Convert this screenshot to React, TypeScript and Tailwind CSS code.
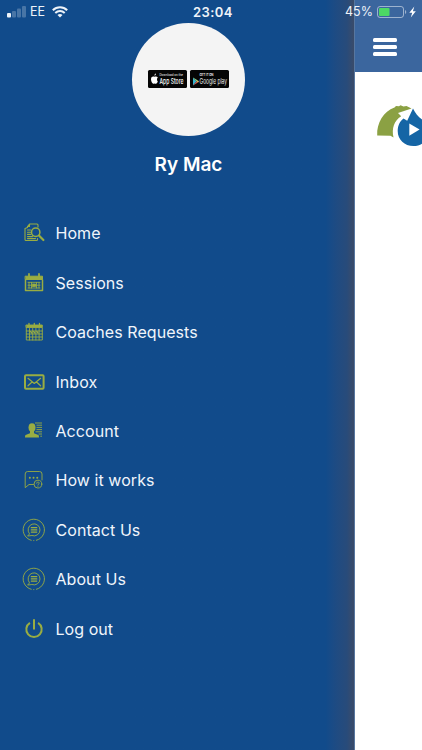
import clsx from 'clsx'

type IconProps = React.ComponentPropsWithoutRef<'svg'>

function SvgIcon({ children, className, ...props }: IconProps) {
  return (
    <svg
      viewBox="0 0 22 22"
      fill="none"
      stroke="currentColor"
      strokeLinecap="round"
      strokeLinejoin="round"
      aria-hidden="true"
      className={clsx('h-[22px] w-[22px] shrink-0', className)}
      {...props}
    >
      {children}
    </svg>
  )
}

function SearchDocumentIcon() {
  return (
    <SvgIcon strokeWidth="1.1">
      <path d="M4.5 5.500V4.500L6.500 2H14a1 1 0 0 1 1 1v2M6.500 2v2.500h-2M2 6.500v11a1 1 0 0 0 1 1h10.500a1 1 0 0 0 1-1v-1M2 6.500l2.500-1" />
      <path d="M4.500 8h3M4.500 10.200h3M4.500 12.400h3M4.500 14.600h5M4.500 16.600h8" />
      <circle cx="12.700" cy="10.300" r="4.200" strokeWidth="1.500" />
      <path d="m16.200 13.700 4.200 4.300" strokeWidth="2.200" />
    </SvgIcon>
  )
}

function CalendarIcon() {
  return (
    <SvgIcon strokeWidth="1">
      <path d="M2.500 4.200h17v3.300h-17z" fill="currentColor" />
      <path d="M2.500 8v10.500h17V8" strokeWidth="1.500" />
      <path d="M6 2v2.500M16 2v2.500" strokeWidth="1.800" />
      <path d="M5 10.300h12M5 16h12M6 10.500V16M8.500 10.500V16M13.500 10.500V16M16 10.500V16M5 13.200h12" strokeWidth="0.900" />
      <path d="M9.500 12h3v2.500h-3z" fill="currentColor" strokeWidth="0.800" />
    </SvgIcon>
  )
}

function ScheduleIcon() {
  return (
    <SvgIcon strokeWidth="0.900">
      <path d="M3.300 4h16v2.500h-16z" fill="currentColor" />
      <path d="M3.300 7v12h16V7M3.300 10h16M3.300 13h16M3.300 16h16M6.500 7.500V19M9.700 7.500V19M12.900 7.500V19M16.100 7.500V19" />
      <path d="M6 2.500V4M11.300 2.500V4M16.500 2.500V4" strokeWidth="1.300" />
      <path d="m7.500 10.500 1.300 1.500M10.600 10.500l1.300 1.500M13.800 10.500l1.300 1.500" strokeWidth="1.200" />
    </SvgIcon>
  )
}

function EnvelopeIcon() {
  return (
    <SvgIcon strokeWidth="2">
      <rect x="2" y="4.300" width="18.600" height="13.400" rx="1" />
      <path d="m5 7.300 6.300 5.200 6.300-5.200M5 14.800l3.500-3.300M17.600 14.800l-3.500-3.300" strokeWidth="1.200" />
    </SvgIcon>
  )
}

function AccountIcon() {
  return (
    <SvgIcon stroke="none" fill="currentColor">
      <ellipse cx="9" cy="7.500" rx="3.500" ry="4.300" />
      <path d="M7 10h4v3.200l3.800 1.500c1 .4 1.200 1 1.200 2.800H2c0-1.800.2-2.400 1.200-2.800L7 13.200z" />
      <path
        d="M12 3h7M13.500 5.200H19M13.500 7.400H19M13.500 9.600H19M12.500 11.800H19M15.500 14H19M17.300 16.200H19"
        fill="none"
        stroke="currentColor"
        strokeWidth="0.900"
        strokeLinecap="butt"
      />
    </SvgIcon>
  )
}

function QuestionBubbleIcon() {
  return (
    <SvgIcon strokeWidth="0.900">
      <path d="M10.500 15.500H6l-3.800 3.200V5a2.500 2.500 0 0 1 2.500-2.500h11.800A2.500 2.500 0 0 1 19 5v6" />
      <circle cx="14.900" cy="15.100" r="3.900" />
      <path d="M13.700 14.200c0-1.600 2.500-1.600 2.500 0 0 1-1.300.8-1.300 1.700M14.900 17.200v.1" />
      <path d="M6.800 8.700h.1M10.500 8.700h.1M14.200 8.700h.1" strokeWidth="1.900" />
    </SvgIcon>
  )
}

function ChatCircleIcon() {
  return (
    <SvgIcon strokeWidth="0.900" className="overflow-visible">
      <path d="M8.200 21.300a10.700 10.700 0 1 1 5.200 0M10.700 21.600h.2" />
      <path d="M6.300 14.600a6 6 0 1 1 2.600 1.900l-3.900.5z" />
      <path d="M8.300 8.700h5.500M8.300 10.900h5.500M8.300 13.100h5.500" strokeWidth="1.200" />
    </SvgIcon>
  )
}

function PowerIcon() {
  return (
    <SvgIcon strokeWidth="2" strokeLinecap="butt">
      <path d="M6.900 4.900a7.700 7.700 0 1 0 8.200 0M11 1.200v10.300" />
    </SvgIcon>
  )
}

const menuItems = [
  { label: 'Home', icon: SearchDocumentIcon },
  { label: 'Sessions', icon: CalendarIcon },
  { label: 'Coaches Requests', icon: ScheduleIcon },
  { label: 'Inbox', icon: EnvelopeIcon },
  { label: 'Account', icon: AccountIcon },
  { label: 'How it works', icon: QuestionBubbleIcon },
  { label: 'Contact Us', icon: ChatCircleIcon },
  { label: 'About Us', icon: ChatCircleIcon },
  { label: 'Log out', icon: PowerIcon },
]

function StatusBar() {
  return (
    <div className="absolute inset-x-0 top-0 z-10 grid h-6 grid-cols-3 items-center pr-[5px] pl-[7px] text-[12.5px] leading-6 text-[#eef3f9]">
      <div className="flex items-center">
        <svg viewBox="0 0 19 12" className="h-3 w-[19px]" fill="currentColor" aria-hidden="true">
          <rect x="0" y="7" width="4" height="4.500" rx="1" />
          <rect x="5" y="5" width="4" height="6.500" rx="1" opacity="0.25" />
          <rect x="10" y="2.500" width="4" height="9" rx="1" opacity="0.25" />
          <rect x="15" y="0" width="4" height="11.500" rx="1" opacity="0.25" />
        </svg>
        <span className="ml-1">EE</span>
        <svg viewBox="0 0 16 12" className="ml-[7px] h-3 w-4" fill="none" stroke="currentColor" strokeWidth="2" aria-hidden="true">
          <path d="M.8 4.300c4.100-4 10.300-4 14.400 0M3.300 7c2.700-2.600 6.700-2.600 9.400 0" />
          <path d="M8 11.500 5.500 9c1.400-1.300 3.600-1.300 5 0z" fill="currentColor" stroke="none" />
        </svg>
      </div>
      <div className="pl-0.5 text-center text-[13px] font-semibold tracking-[0.4px]">23:04</div>
      <div className="flex items-center justify-end">
        <span>45%</span>
        <svg viewBox="0 0 40 12" className="ml-1 h-3 w-10" fill="none" aria-hidden="true">
          <rect x="0.500" y="0.500" width="26" height="11" rx="2.500" stroke="#fff" strokeOpacity="0.500" />
          <rect x="2" y="2" width="10.500" height="8" rx="1" fill="#4cd964" />
          <path d="M28 4c1.700.6 1.700 3.400 0 4z" fill="#fff" fillOpacity="0.500" />
          <path d="m37.300.5-5 6.200h2.900L33.800 11.500l5-6.200h-2.900z" fill="#fff" />
        </svg>
      </div>
    </div>
  )
}

function AppStoreBadge() {
  return (
    <svg viewBox="0 0 39 18" className="h-[18px] w-[39px] overflow-visible" role="img" aria-label="App Store">
      <rect width="39" height="18" rx="1.500" fill="#050505" />
      <path
        d="M6.400 5.600c0-1.200.6-1.900 1.500-2.200.1 1.100-.5 2-1.500 2.200M9 9.400c0-1 .4-1.500.9-1.900-.9-1.300-2.200-1.300-3.400-.7-1.300-.6-3.500-.4-3.500 2.500 0 2.200 1.200 4.400 2.300 4.400.5 0 .7-.3 1.300-.3s.8.3 1.300.3c.9 0 1.500-1.100 1.900-2.200-.5-.3-.8-1-.8-2.100"
        fill="#fff"
      />
      <text x="11.500" y="6.300" fontSize="3.500" textLength="23.500" lengthAdjust="spacingAndGlyphs" fill="#fff">
        Download on the
      </text>
      <text x="11.500" y="13.600" fontSize="7.500" fontWeight="500" textLength="24" lengthAdjust="spacingAndGlyphs" fill="#fff">
        App Store
      </text>
    </svg>
  )
}

function GooglePlayBadge() {
  return (
    <svg viewBox="0 0 39 18" className="h-[18px] w-[39px] overflow-visible" role="img" aria-label="Google play">
      <rect width="39" height="18" rx="1.500" fill="#050505" />
      <path d="M3 7.500v8l3.500-4z" fill="#39b5cf" />
      <path d="m3 7.500 5 3-1.500 1z" fill="#9bd17a" />
      <path d="m3 15.500 5-3-1.500-1z" fill="#d9534f" />
      <path d="M6.500 11.500 8 10.500l1 1-1 1z" fill="#efc05a" />
      <text x="9.500" y="5.700" fontSize="3.300" fontWeight="600" textLength="14" lengthAdjust="spacingAndGlyphs" fill="#fff">
        GET IT ON
      </text>
      <text x="9.500" y="13.700" fontSize="7.500" textLength="27.500" lengthAdjust="spacingAndGlyphs" fill="#eee">
        Google play
      </text>
    </svg>
  )
}

function Drawer() {
  return (
    <aside className="flex w-[354px] shrink-0 flex-col bg-linear-to-r from-[#114b8b] from-92% via-[#284b7a] via-98% to-[#3a4b69]">
      <div className="flex flex-col items-center pt-[22.500px] pl-[23px]">
        <div className="flex h-[113px] w-[113px] items-center justify-center gap-[3px] rounded-full bg-[#f4f4f4]">
          <AppStoreBadge />
          <GooglePlayBadge />
        </div>
        <h1 className="mt-[15px] text-[19px] leading-7 font-semibold text-white">Ry Mac</h1>
      </div>
      <nav className="mt-[30px]">
        <ul>
          {menuItems.map(({ label, icon: Icon }) => (
            <li
              key={label}
              className="flex h-[49.450px] items-center gap-[10.500px] pl-[23px] text-[#99ad42]"
            >
              <Icon />
              <span className="text-base tracking-[0.06px] text-[#f0f5fb]">{label}</span>
            </li>
          ))}
        </ul>
      </nav>
    </aside>
  )
}

function Logo() {
  return (
    <svg viewBox="0 0 46 48" className="h-12 w-[46px]" aria-hidden="true">
      <path
        d="M1.200 35.500C.500 23 7.500 11.500 18.500 7.500L20 6l3 .3 1.500-1 3 1.200 3-.5 5 2.500-13.500 4.500 3.200 3.200C18 20.500 15.500 28.500 17.500 37.500l-3-1.800z"
        fill="#8ba143"
      />
      <path
        d="M37 8.500 31.200 20.700l-3.700-2.200C23.500 21.500 21.700 26 21.700 31c0 8.700 6.800 15 15.800 15 3.300 0 6.200-.8 8.500-2.300V19.500c-4-2.500-6.700-6.500-9-11"
        fill="#1565a5"
      />
      <path d="M33.300 23.500v12.300l10.300-6.200z" fill="#fff" />
    </svg>
  )
}

function HomePage() {
  return (
    <main className="flex flex-1 flex-col overflow-hidden border-l border-[#5777a0] bg-white">
      <header className="flex h-[72px] shrink-0 items-end bg-[#3b669e] pb-4 pl-[18px]">
        <button type="button" aria-label="Menu" className="flex flex-col gap-[3px]">
          <span className="h-1 w-6 rounded-[1.500px] bg-white" />
          <span className="h-1 w-6 rounded-[1.500px] bg-white" />
          <span className="h-1 w-6 rounded-[1.500px] bg-white" />
        </button>
      </header>
      <div className="pt-7 pl-[21px]">
        <Logo />
      </div>
    </main>
  )
}

export default function App() {
  return (
    <div className="relative flex h-[750px] w-[422px] overflow-hidden bg-[#114b8b] font-['Inter','Liberation_Sans',sans-serif]">
      <StatusBar />
      <Drawer />
      <HomePage />
    </div>
  )
}
